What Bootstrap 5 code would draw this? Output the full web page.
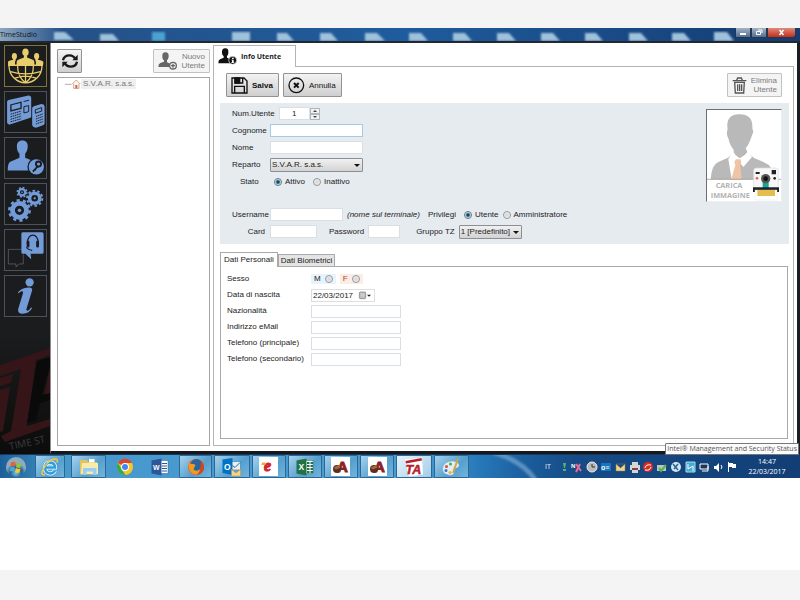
<!DOCTYPE html>
<html lang="it">
  <head>
    <meta charset="utf-8">
    <meta name="viewport" content="width=device-width, initial-scale=1">
    <title>TimeStudio</title>
    <link href="https://cdn.jsdelivr.net/npm/bootstrap@5.3.2/dist/css/bootstrap.min.css" rel="stylesheet">
    <script src="https://cdn.jsdelivr.net/npm/bootstrap@5.3.2/dist/js/bootstrap.bundle.min.js"></script>
    <style>
      body { background: #f4f4f4; font-family: "Liberation Sans", Arial, sans-serif; font-size: 8px; line-height: 10px; color: #222; }
      svg { display: block; flex: none; }
      .page { padding: 28px 0 30px; }
      .sheet { min-height: 542px; }

      /* title bar */
      .titlebar { height: 15px; background: #1d508f; border-bottom: 2px solid #22282e; }
      .titlebar .glass { left: 0; top: 0; width: 100%; height: 13px; }
      .titlebar .app-name { font-family: "Open Sans", sans-serif; font-size: 7px; color: #0c1622; line-height: 13px; }
      .win-btn { height: 10px; width: 16px; border: 1px solid #26364e; border-top: 0; background: linear-gradient(#a3b4c8, #556f90); }
      .win-close { width: 29px; background: linear-gradient(#dd8a7c, #c32f1c); border-radius: 0 0 3px 0; }

      /* side menu */
      .side { width: 50px; background: linear-gradient(#1b1c1d 70%, #0c0c0c); padding: 2px 3px 0 4px; }
      .side .logo { left: 0; bottom: 0; }
      .side-btn { width: 43px; height: 42px; background: #1a1c1e; border: 1px solid #4c5160; color: #739bd8; }
      .side-btn.current { border-color: #83733a; color: #e9cd6b; }

      .work { border-left: 1px solid #8d8d8d; border-right: 3px solid #1a1d22; border-bottom: 3px solid #15181c; padding: 2px 3px 5px 6px; background: #fff; }
      .tree-col { width: 153px; padding-top: 4px; }
      .detail-col { padding-left: 3px; }
      .tree { margin-top: 4px; border: 1px solid #a5a5a5; padding: 1px 7px; color: #777; }
      .tree-node { background: #efefef; padding: 0 2px; }
      .tool { height: 24px; border: 1px solid #939393; border-radius: 1px; background: linear-gradient(#f3f3f3, #cfcfcf); color: #111; line-height: 9px; padding: 0 5px 0 4px; }
      .tool.off { background: #f4f4f4; border-color: #c2c2c2; color: #7b7b7b; padding: 0 4px; }
      .tool.square { width: 25px; padding: 0; }
      .tools { padding: 0 7px 0 6px; }

      /* tabs and their panels */
      .main-tab { width: 83px; height: 22px; border: 1px solid #b4b4b4; border-bottom: 0; background: #fff; margin-bottom: -1px; font-family: "Open Sans", sans-serif; font-weight: 700; font-size: 7px; color: #1c1c1c; }
      .main-panel { border: 1px solid #b4b4b4; padding: 6px 4px 6px 6px; }
      .user-data { background: #e6ebf0; margin-top: 6px; padding: 2px 7px 4px 12px; }
      .line { height: 17px; }
      .second-block { margin-top: 16px; }
      .inner-tab { height: 12px; border: 1px solid #a9a9a9; border-bottom: 0; background: #e4e4e4; color: #222; padding: 0 2px; }
      .inner-tab.active { height: 15px; background: #fff; margin-bottom: -1px; padding: 0 3px; }
      .inner-tabs { margin-top: 8px; }
      .inner-panel { border: 1px solid #a9a9a9; min-height: 173px; padding: 4px 6px; margin-right: 1px; }
      .inner-panel .line { height: 16px; }

      /* form parts */
      .label-main { width: 38px; }
      .label-end { width: 38px; text-align: right; padding-right: 5px; }
      .label-detail { width: 84px; }
      .field { height: 13px; min-height: 0; padding: 0 3px; font-size: 8px; line-height: 11px; border: 1px solid #dadfe3; border-radius: 0; color: #222; background: #fff; }
      .field.focused { border-color: #a9c7e8; }
      .w-name { width: 93px; }
      .w-user { width: 73px; }
      .w-card { width: 47px; }
      .w-pass { width: 32px; }
      .w-detail { width: 90px; }
      .num { width: 31px; text-align: center; }
      .spin { width: 10px; height: 6px; border: 1px solid #b0b6bd; background: #f2f2f2; }
      .date-box { width: 64px; border: 1px solid #dedede; height: 13px; }
      .date-text { width: 46px; border: 0; padding: 0 1px; height: 11px; }
      .combo { height: 14px; padding: 0 10px 0 1px; font-size: 8px; line-height: 11px; border: 1px solid #8b8f94; border-radius: 1px; color: #222;
        background: linear-gradient(#f1f1f1, #d3d3d3); appearance: none; }
      .combo-arrow { right: 3px; top: 6px; border: 3px solid transparent; border-top-color: #111; border-bottom: 0; pointer-events: none; }
      .dot { appearance: none; width: 8px; height: 8px; margin: 0; border: 1px solid #8f979e; border-radius: 50%; background: radial-gradient(#d4d4d4, #f8f8f8); }
      .dot:checked { border-color: #66747f; background: radial-gradient(#16465f 0 25%, #5f9fbd 45%, #f3f7f9 70%); }
      .dot + label { margin-left: 3px; }
      .sex-m { background: #e8f3fc; padding: 0 3px; }
      .sex-f { background: #fdece4; color: #a0472b; padding: 0 3px; }
      .photo { width: 76px; height: 93px; margin-top: 4px; border: 1px solid #6e6e6e; border-right-color: #eee; border-bottom-color: #eee; background: #fff; }

      /* taskbar */
      .taskbar { height: 24px; background: linear-gradient(90deg, #1c6098 0, #4798cc 8%, #4a9dd2 52%, #2678b8 60%, #1b5c9c 66%, #174b86 72%, #123e75); border-top: 1px solid #16395c; }
      .apps { width: 398px; gap: 2px; margin-left: 6px; }
      .app { padding: 0; border: 1px solid transparent; background: none; border-radius: 1px; }
      .app.open { border-color: #2d6690; background: linear-gradient(135deg, #a6d2ee, #559fce 60%, #72b5de); }
      .app.front { background: linear-gradient(135deg, #e6f2fa, #a4cde9); }
      .start { width: 32px; }
      .ie { width: 30px; margin-left: 3px; }
      .tray { width: 186px; height: 14px; }
      .clock { width: 44px; margin-right: 11px; color: #fff; font-family: "Open Sans", sans-serif; font-size: 7px; }
      .lang { width: 14px; margin-right: 4px; color: #d5e2f0; font-size: 7px; }
      .hint { right: 1px; bottom: 23px; border: 1px solid #777; background: #fbfbfb; color: #555; padding: 0 1px; border-radius: 1px; font-family: "Open Sans", sans-serif; font-size: 7px; white-space: nowrap; }
    </style>
  </head>
  <body>
    <div class="page">
      <div class="sheet bg-white">
        <header class="titlebar position-relative d-flex justify-content-between">
          <svg class="glass position-absolute" viewBox="0 0 800 13" preserveAspectRatio="none" aria-hidden="true">
            <defs>
              <linearGradient id="sky"><stop offset="0" stop-color="#8fa7be"/><stop offset=".03" stop-color="#6485aa"/><stop offset=".08" stop-color="#255187"/><stop offset=".5" stop-color="#1f5c9d"/><stop offset="1" stop-color="#143b72"/></linearGradient>
              <filter id="soft"><feGaussianBlur stdDeviation="1.3"/></filter>
            </defs>
            <path fill="url(#sky)" d="M0 0h800v13H0z"/>
            <g fill="#9fc1dc" filter="url(#soft)">
              <path d="M54 4h11l9 8H54zM100 6h13l6 7h-19zM232 4h18v9h-18zM277 5h10l7 8h-17zM320 5h11l7 8h-18zM365 5h12l8 8h-20zM409 5h12l7 8h-19zM453 5h12l7 8h-19zM497 5h12l7 8h-19zM541 5h12l7 8h-19zM585 5h11l7 8h-18zM629 5h12l7 8h-19zM672 5h12l7 8h-19zM714 4h13l7 9h-20z"/>
              <path fill="#4ba2d0" d="M152 4h13v9h-13z"/>
            </g>
          </svg>
          <span class="app-name position-relative">TimeStudio</span>
          <div class="position-relative d-flex">
            <button class="win-btn p-0" aria-label="Riduci"><svg width="14" height="9" viewBox="0 0 14 9"><path d="M4 5h6v2H4z" fill="#fff"/></svg></button>
            <button class="win-btn p-0" aria-label="Ripristina"><svg width="14" height="9" viewBox="0 0 14 9"><path d="M6 2h4v3M4.500 3.500h4v3h-4z" fill="none" stroke="#fff"/></svg></button>
            <button class="win-btn win-close p-0 me-1" aria-label="Chiudi"><svg width="27" height="9" viewBox="0 0 27 9"><path d="M11.500 2l4 5M15.500 2l-4 5" stroke="#fff" stroke-width="1.500"/></svg></button>
          </div>
        </header>

        <div class="d-flex">
          <nav class="side position-relative d-flex flex-column gap-1" aria-label="Menu">
            <svg class="logo position-absolute" width="50" height="110" viewBox="0 0 50 110" aria-hidden="true">
              <path fill="#351518" d="M0 21L50 4v7L36 16 27 82l23-7v7L5 98l-4-6 10-5L21 25 0 32zM0 34l13-4-2 9-11 3zM0 46l10-3-7 44-3 1zM50 25l-6 27 6-2z"/>
              <path fill="#0a0a0a" d="M37 17l13-4v9l-8 29 8-2v7l-10 3-4 17-9 3z"/>
              <text x="10" y="106" transform="rotate(-12 10 106)" fill="#3b3d3f" font-family="Open Sans, sans-serif" font-size="10">TIME ST</text>
            </svg>
            <button class="side-btn current position-relative p-0" aria-label="Utenti">
              <svg width="41" height="40" viewBox="0 0 128 126" fill="currentColor">
                <ellipse cx="64" cy="20" rx="10" ry="12"/><ellipse cx="29" cy="32" rx="8" ry="10"/><ellipse cx="99" cy="32" rx="8" ry="10"/>
                <path d="M59 29h10v7l18 7q6 2 5 15H36q-1-13 5-15l18-7zM25 40h8v5q-3 4-2 13H9V50q1-4 16-7zM95 40h8v3q16 3 17 7v8H97q1-9-2-13zM9 58h110v5H9z"/>
                <g fill="none" stroke="currentColor" stroke-width="4"><path d="M12 62a52 54 0 0 0 104 0M64 62v54M39 62q0 35 25 54 25-19 25-54M17 81q47 14 94 0M31 101q33-12 66 0"/></g>
              </svg>
            </button>
            <button class="side-btn position-relative p-0" aria-label="Terminali">
              <svg width="41" height="40" viewBox="0 0 128 126" fill="currentColor">
                <path d="M6 31q0-5 5-6l62-14q9 0 9 8v58q0 4-5 5l-62 20q-7 1-9-5zM85 51q1-4 5-6l24-7q9 0 10 7v54q0 4-5 6l-22 8q-10-1-12-8z"/>
                <path fill="#1a1c1e" d="M16 39l36-9v23l-36 9z"/><path d="M20 42l28-7v15l-28 7z"/>
                <g fill="none" stroke="#1a1c1e" stroke-width="3"><path d="M58 30l17-4M59 46v20l15-4V43zM95 56l20-7v11l-20 7z"/></g>
                <path stroke="#1a1c1e" stroke-width="3" stroke-dasharray="5 2" d="M17 70l34-10M17 78l34-10M17 86l34-10M17 94l34-10M97 77l22-8M97 85l22-8M97 93l22-8M97 101l22-8"/>
              </svg>
            </button>
            <button class="side-btn position-relative p-0" aria-label="Accessi">
              <svg width="41" height="40" viewBox="0 0 128 126" fill="currentColor">
                <path d="M54 8c12 0 18 8 17 20-1 10-4 17-8 21v13l29 12q7 3 9 28H8q0-23 8-27l29-13V49c-5-4-8-11-8-21C36 16 42 8 54 8z"/>
                <circle cx="98" cy="91" r="28" fill="#1a1c1e"/><circle cx="98" cy="91" r="24"/>
                <circle cx="105" cy="82" r="8" fill="none" stroke="#1a1c1e" stroke-width="6"/><path d="M100 88l-15 16 5 4 3-5 4-1 1-4 8-7" fill="#1a1c1e"/>
              </svg>
            </button>
            <button class="side-btn position-relative p-0" aria-label="Impostazioni">
              <svg width="41" height="40" viewBox="0 0 128 126" fill="none" stroke="currentColor">
                <circle cx="45" cy="83" r="22" stroke-width="15"/><circle cx="45" cy="83" r="32" stroke-width="8" stroke-dasharray="10 10.100"/><circle cx="45" cy="83" r="5" fill="currentColor"/>
                <circle cx="93" cy="45" r="16" stroke-width="11"/><circle cx="93" cy="45" r="24" stroke-width="6" stroke-dasharray="8 7.080"/><circle cx="93" cy="45" r="3" fill="currentColor"/>
                <circle cx="53" cy="26" r="10" stroke-width="7"/><circle cx="53" cy="26" r="15" stroke-width="5" stroke-dasharray="6 5.780"/><circle cx="53" cy="26" r="2" fill="currentColor"/>
              </svg>
            </button>
            <button class="side-btn position-relative p-0" aria-label="Assistenza">
              <svg width="41" height="40" viewBox="0 0 128 126">
                <path fill="none" stroke="#6c7077" stroke-width="2" d="M52 61H10v46h24v9l11-9h12V76"/>
                <path fill="currentColor" d="M55 7h61q5 0 5 5v58q0 5-5 5H80l2 17-18-17h-9q-4 0-4-5V12q0-5 4-5z"/>
                <g fill="none" stroke="#1a1c1e"><path d="M70 42c-2-34 36-34 34 0" stroke-width="4"/><path d="M72 38v13M102 38v13" stroke-width="9" stroke-linecap="round"/><path d="M67 54q3 8 18 10" stroke-width="4"/></g>
              </svg>
            </button>
            <button class="side-btn position-relative p-0" aria-label="Informazioni">
              <svg width="41" height="40" viewBox="0 0 128 126" fill="currentColor">
                <circle cx="77" cy="20" r="13"/><path d="M40 52q10-14 33-16 13-1 12 9L67 104q-1 7 5 5 6-3 9-10l4 2q-9 17-30 18-17 0-14-15l15-50q2-9-7-5l-7 5z"/>
              </svg>
            </button>
          </nav>

          <main class="work d-flex flex-grow-1">
            <section class="tree-col d-flex flex-column flex-shrink-0">
              <div class="d-flex justify-content-between">
                <button class="tool square d-flex align-items-center justify-content-center" aria-label="Aggiorna">
                  <svg width="18" height="18" viewBox="0 0 54 54" fill="none" stroke="#181818" stroke-width="7"><path d="M6 25q3-15 20-15 10 0 16 9M48 29q-3 15-20 15-10 0-16-9"/><path d="M50 8v17H34zM4 46V29h16z" fill="#181818" stroke="none"/></svg>
                </button>
                <button class="tool off d-flex align-items-center justify-content-between" disabled>
                  <svg width="19" height="18" viewBox="0 0 57 54" fill="#666"><path d="M22 1c8 0 11 6 10 13-1 6-3 9-5 11v6l11 5q3 3 4 9H1q0-10 6-12l11-4v-4c-3-2-5-6-5-11C12 6 15 1 22 1z"/><circle cx="45" cy="41" r="10" fill="#f4f4f4" stroke="#666" stroke-width="4"/><path d="M43 35h4v4h4v4h-4v4h-4v-4h-4v-4h4z"/></svg>
                  <span class="text-end ps-1">Nuovo<br>Utente</span>
                </button>
              </div>
              <div class="tree flex-grow-1">
                <div class="d-flex align-items-center">
                  <svg width="16" height="10" viewBox="0 0 48 30"><path d="M0 16h20" stroke="#888" stroke-width="2"/><path d="M22 15L34 3l12 12M26 14v14h16V14" fill="#fff9ee" stroke="#cf9078" stroke-width="2.500"/><path d="M31 18h6v10h-6z" fill="#c96650"/></svg>
                  <span class="tree-node">S.V.A.R. s.a.s.</span>
                </div>
              </div>
            </section>

            <section class="detail-col flex-grow-1 d-flex flex-column">
              <div class="main-tab d-flex align-items-center gap-1 ps-1 position-relative">
                <svg width="19" height="17" viewBox="0 0 57 51"><path d="M22 1c8 0 10 6 9 13 0 5-2 8-4 10v5l11 5q4 2 4 12H1q0-10 5-12l11-5v-5c-3-2-5-5-5-10C11 7 14 1 22 1z" fill="#111"/><circle cx="44" cy="37" r="12" fill="#111" stroke="#fff" stroke-width="2"/><path d="M42 29h5v4h-5zM40 35h7v8h2v2h-9v-2h2v-6h-2z" fill="#fff"/></svg>
                <span>Info Utente</span>
              </div>
              <div class="main-panel flex-grow-1">
                <div class="tools d-flex justify-content-between">
                  <div class="d-flex gap-1">
                    <button class="tool d-flex align-items-center gap-1 fw-bold">
                      <svg width="17" height="17" viewBox="0 0 51 51" fill="none" stroke="#111" stroke-width="4"><path d="M3 3h36l9 9v36H3z"/><path d="M12 3v15h23V3M11 48V28h29v20"/><path d="M12 3h14v15H12z" fill="#111"/></svg>
                      <span>Salva</span>
                    </button>
                    <button class="tool d-flex align-items-center gap-1">
                      <svg width="17" height="17" viewBox="0 0 51 51" fill="none" stroke="#111"><circle cx="25" cy="25" r="22" stroke-width="4"/><path d="M18 18l14 14M32 18L18 32" stroke-width="6"/></svg>
                      <span>Annulla</span>
                    </button>
                  </div>
                  <button class="tool off d-flex align-items-center gap-1" disabled>
                    <svg width="15" height="17" viewBox="0 0 45 51" fill="none" stroke="#555" stroke-width="4"><path d="M2 11h41M14 10l3-7h11l3 7M6 16h33M8 16l2 32h25l2-32M17 22v20M23 22v20M29 22v20"/></svg>
                    <span class="text-end">Elimina<br>Utente</span>
                  </button>
                </div>

                <form class="user-data d-flex justify-content-between">
                  <div>
                    <div class="line d-flex align-items-center">
                      <label for="num">Num.Utente</label>
                      <input class="field num ms-1" id="num" value="1">
                      <div>
                        <button type="button" class="spin d-block p-0" aria-label="Aumenta"><svg width="8" height="4" viewBox="0 0 8 4"><path d="M2 3l2-2 2 2z" fill="#444"/></svg></button>
                        <button type="button" class="spin d-block p-0" aria-label="Diminuisci"><svg width="8" height="4" viewBox="0 0 8 4"><path d="M2 1l2 2 2-2z" fill="#444"/></svg></button>
                      </div>
                    </div>
                    <div class="line d-flex align-items-center">
                      <label class="label-main" for="cognome">Cognome</label>
                      <input class="field focused w-name" id="cognome">
                    </div>
                    <div class="line d-flex align-items-center">
                      <label class="label-main" for="nome">Nome</label>
                      <input class="field w-name" id="nome">
                    </div>
                    <div class="line d-flex align-items-center">
                      <label class="label-main" for="reparto">Reparto</label>
                      <div class="position-relative">
                        <select class="combo w-name d-block" id="reparto"><option>S.V.A.R. s.a.s.</option></select>
                        <span class="combo-arrow position-absolute"></span>
                      </div>
                    </div>
                    <div class="line d-flex align-items-center" role="radiogroup" aria-label="Stato">
                      <span class="label-main ps-2 me-1">Stato</span>
                      <input class="dot" type="radio" name="stato" id="attivo" checked><label class="me-2" for="attivo">Attivo</label>
                      <input class="dot" type="radio" name="stato" id="inattivo"><label for="inattivo">Inattivo</label>
                    </div>
                    <div class="line second-block d-flex align-items-center">
                      <label class="label-main" for="username">Username</label>
                      <input class="field w-user" id="username">
                      <em class="ps-1 pe-2">(nome sul terminale)</em>
                      <span class="me-2">Privilegi</span>
                      <input class="dot" type="radio" name="privilegi" id="utente" checked><label class="me-1" for="utente">Utente</label>
                      <input class="dot" type="radio" name="privilegi" id="admin"><label for="admin">Amministratore</label>
                    </div>
                    <div class="line d-flex align-items-center">
                      <label class="label-end" for="card-no">Card</label>
                      <input class="field w-card" id="card-no">
                      <label class="ps-2 ms-1 pe-1" for="password">Password</label>
                      <input class="field w-pass" type="password" id="password">
                      <label class="ps-3 pe-1" for="gruppo">Gruppo TZ</label>
                      <div class="position-relative">
                        <select class="combo d-block" id="gruppo"><option>1 [Predefinito]</option></select>
                        <span class="combo-arrow position-absolute"></span>
                      </div>
                    </div>
                  </div>
                  <button type="button" class="photo p-0" aria-label="Carica immagine">
                    <svg width="74" height="91" viewBox="0 0 222 273">
                      <path fill="#b9b9b9" d="M62 58c-6-32 12-46 34-45 27-1 42 12 40 42l3 10-8 22q-8 22-15 27l5 12 20 18 30 13q27 10 31 51H11q3-44 23-52l29-13 17-16V119Q68 106 65 88q-9-15-3-30z"/>
                      <path fill="#fff" d="M77 123q8 15 21 22 16-7 26-22l11 18-26 30-14-18-21 55L64 148z"/>
                      <path fill="#efc3a3" d="M87 148h13l3 8-3 10 4 42H73l12-43-3-9z"/>
                      <path stroke="#888" stroke-width="2" d="M0 208h222"/>
                      <text x="66" y="234" text-anchor="middle" fill="#b3b3b3" font-family="Open Sans, sans-serif" font-weight="700" font-size="22">CARICA</text>
                      <text x="70" y="264" text-anchor="middle" fill="#b3b3b3" font-family="Open Sans, sans-serif" font-weight="700" font-size="22">IMMAGINE</text>
                      <rect x="140" y="174" width="74" height="68" rx="8" fill="#f7f7f7" stroke="#ddd" stroke-width="2"/>
                      <path fill="#222" d="M146 186h12v6h-12zM194 180h13v13h-13z"/><path fill="#16a79a" d="M167 214h18v22h-18z"/>
                      <circle cx="176" cy="206" r="14" fill="#555"/><circle cx="176" cy="206" r="7" fill="#111"/><circle cx="150" cy="205" r="4" fill="#e06446"/><circle cx="203" cy="205" r="4" fill="#222"/>
                      <path fill="#1d2429" d="M138 232h78v14h-9v-6h-60v6h-9z"/><path fill="#fff" stroke="#ddd" d="M144 240h66v30h-66z"/><path fill="#e5bd4f" d="M151 240h53v18h-53z"/>
                    </svg>
                  </button>
                </form>

                <div class="inner-tabs d-flex align-items-end" role="tablist">
                  <button class="inner-tab active" role="tab" aria-selected="true">Dati Personali</button>
                  <button class="inner-tab" role="tab" aria-selected="false">Dati Biometrici</button>
                </div>
                <form class="inner-panel">
                  <div class="line d-flex align-items-center" role="radiogroup" aria-label="Sesso">
                    <span class="label-detail">Sesso</span>
                    <span class="sex-m d-flex align-items-center"><label for="sesso-m" class="me-1">M</label><input class="dot" type="radio" name="sesso" id="sesso-m"></span>
                    <span class="sex-f d-flex align-items-center ms-1"><label for="sesso-f" class="me-1">F</label><input class="dot" type="radio" name="sesso" id="sesso-f"></span>
                  </div>
                  <div class="line d-flex align-items-center">
                    <label class="label-detail" for="nascita">Data di nascita</label>
                    <div class="date-box d-flex align-items-center">
                      <input class="field date-text" id="nascita" value="22/03/2017">
                      <svg width="14" height="9" viewBox="0 0 42 27"><rect x="4" y="3" width="19" height="20" rx="3" fill="#bbb" stroke="#777" stroke-width="2"/><path d="M7 9h13M7 14h13M11 6v14M16 6v14" stroke="#eee"/><path d="M27 11h12l-6 6z" fill="#222"/></svg>
                    </div>
                  </div>
                  <div class="line d-flex align-items-center">
                    <label class="label-detail" for="nazionalita">Nazionalità</label>
                    <input class="field w-detail" id="nazionalita">
                  </div>
                  <div class="line d-flex align-items-center">
                    <label class="label-detail" for="email">Indirizzo eMail</label>
                    <input class="field w-detail" id="email">
                  </div>
                  <div class="line d-flex align-items-center">
                    <label class="label-detail" for="tel1">Telefono (principale)</label>
                    <input class="field w-detail" id="tel1">
                  </div>
                  <div class="line d-flex align-items-center">
                    <label class="label-detail" for="tel2">Telefono (secondario)</label>
                    <input class="field w-detail" id="tel2">
                  </div>
                </form>
              </div>
            </section>
          </main>
        </div>

        <footer class="taskbar position-relative d-flex align-items-stretch">
          <button class="app start d-flex align-items-center justify-content-center" aria-label="Start">
            <svg width="22" height="22" viewBox="0 0 44 44"><defs><radialGradient id="orb" cy=".8"><stop offset="0" stop-color="#6fc9e8"/><stop offset=".6" stop-color="#245f86"/><stop offset="1" stop-color="#8eabc0"/></radialGradient></defs><circle cx="22" cy="22" r="20" fill="url(#orb)"/><path fill="#e9612e" d="M12 13q5-3 9 0l-1 8q-4-2-9 0z"/><path fill="#8ec63f" d="M23 14q5 3 10 0l-2 9q-5 2-9-1z"/><path fill="#4aa8e0" d="M11 23q5-2 9 0l-2 9q-4-3-9-1z"/><path fill="#fbc52e" d="M22 24q4 3 9 1l-2 8q-5 2-9-1z"/></svg>
          </button>
          <button class="app open ie d-flex align-items-center justify-content-center" aria-label="Internet Explorer">
            <svg width="20" height="20" viewBox="0 0 40 40" fill="none"><path d="M30 27q-3 6-10 6-10-1-10-12 1-10 10-10 10 1 10 10H12" stroke="#eaf7ff" stroke-width="8"/><path d="M30 27q-3 6-10 6-10-1-10-12 1-10 10-10 10 1 10 10H12" stroke="#2f9fdc" stroke-width="5"/><path d="M34 11q3-8-5-7Q13 8 5 28q-4 9 5 7" stroke="#f3ca41" stroke-width="3"/></svg>
          </button>
          <div class="apps d-flex">
            <button class="app open flex-fill d-flex align-items-center justify-content-center" aria-label="Esplora risorse">
              <svg width="20" height="18" viewBox="0 0 40 36"><path fill="#e2c45c" d="M2 4h14l3 4h17v25H2z"/><path fill="#f9ebac" d="M6 10h32v22H4z"/><path fill="#fff" d="M20 2h11v7H20z"/><path fill="#9bcdf0" d="M8 20h27v14h-7v-7H15v7H8z"/></svg>
            </button>
            <button class="app flex-fill d-flex align-items-center justify-content-center" aria-label="Chrome">
              <svg width="18" height="18" viewBox="0 0 36 36"><circle cx="18" cy="18" r="16" fill="#f5c72d"/><path fill="#db4437" d="M18 18L4 10a16 16 0 0 1 28 0H18z"/><path fill="#34a853" d="M4 10l10 17 5 7A16 16 0 0 1 4 10z"/><circle cx="18" cy="18" r="8" fill="#fff"/><circle cx="18" cy="18" r="6" fill="#4285f4"/></svg>
            </button>
            <button class="app flex-fill d-flex align-items-center justify-content-center" aria-label="Word">
              <svg width="18" height="18" viewBox="0 0 36 36"><path fill="#fff" stroke="#2b579a" d="M18 5h16v26H18z"/><path stroke="#2b579a" stroke-width="2" d="M22 11h10M22 16h10M22 21h10M22 26h10"/><path fill="#2b579a" d="M1 5l20-4v34L1 31z"/><text x="4" y="24" fill="#fff" font-family="Liberation Sans" font-weight="700" font-size="14">W</text></svg>
            </button>
            <button class="app open flex-fill d-flex align-items-center justify-content-center" aria-label="Firefox">
              <svg width="18" height="18" viewBox="0 0 36 36"><circle cx="18" cy="18" r="16" fill="#e5661c"/><circle cx="19" cy="14" r="12" fill="#28659e"/><path fill="#f09a26" d="M3 9q5 4 10 3 6 1 2 6l-2 5q8 7 17-5 2 13-12 15Q3 33 3 9z"/><path fill="#cc4820" d="M27 5q10 9 6 20-5 8-14 9 10-7 8-29z"/></svg>
            </button>
            <button class="app open flex-fill d-flex align-items-center justify-content-center" aria-label="Outlook">
              <svg width="20" height="20" viewBox="0 0 40 40"><path fill="#eee" stroke="#0072c6" d="M19 9h18v18H19z"/><path stroke="#0072c6" stroke-width="2" fill="none" d="M21 17l5 4 10-10"/><path fill="#0072c6" d="M1 5l20-3v34L1 32z"/><text x="4" y="25" fill="#fff" font-family="Liberation Sans" font-weight="700" font-size="17">O</text><path fill="#f5d18a" stroke="#c59445" d="M19 25h18v13H19zl9 7 9-7"/></svg>
            </button>
            <button class="app open flex-fill d-flex align-items-center justify-content-center" aria-label="e">
              <svg width="19" height="19" viewBox="0 0 38 38"><path fill="#fff" d="M0 0h38v38H0z"/><text x="10" y="28" fill="#d1232d" stroke="#d1232d" stroke-width="2" font-family="Liberation Serif" font-style="italic" font-weight="700" font-size="32">e</text><path fill="#efac32" d="M6 11h7v5H5z"/></svg>
            </button>
            <button class="app open flex-fill d-flex align-items-center justify-content-center" aria-label="Excel">
              <svg width="18" height="18" viewBox="0 0 36 36"><path fill="#fff" stroke="#217346" d="M18 5h16v26H18z"/><path stroke="#217346" stroke-width="4" stroke-dasharray="5 2" d="M22 10h12M22 16h12M22 22h12M22 28h12"/><path fill="#217346" d="M1 5l20-4v34L1 31z"/><text x="5" y="24" fill="#fff" font-family="Liberation Sans" font-weight="700" font-size="17">X</text></svg>
            </button>
            <button class="app open flex-fill d-flex align-items-center justify-content-center" aria-label="Archivio">
              <svg width="19" height="19" viewBox="0 0 38 38"><path fill="#fff" d="M0 0h38v38H0z"/><text x="12" y="30" fill="#8f1f22" stroke="#8f1f22" stroke-width="2" font-family="Liberation Sans" font-weight="700" font-size="30">A</text><circle cx="12" cy="24" r="8" fill="#5c3021"/><path fill="#a66839" d="M5 21l11-5 3 5-9 4z"/></svg>
            </button>
            <button class="app open flex-fill d-flex align-items-center justify-content-center" aria-label="Archivio 2">
              <svg width="19" height="19" viewBox="0 0 38 38"><path fill="#fff" d="M0 0h38v38H0z"/><text x="12" y="30" fill="#8f1f22" stroke="#8f1f22" stroke-width="2" font-family="Liberation Sans" font-weight="700" font-size="30">A</text><circle cx="12" cy="24" r="8" fill="#5c3021"/><path fill="#a66839" d="M5 21l11-5 3 5-9 4z"/></svg>
            </button>
            <button class="app open front flex-fill d-flex align-items-center justify-content-center" aria-label="TimeStudio">
              <svg width="20" height="20" viewBox="0 0 40 40"><path fill="#fff" d="M2 5l34-4 2 34-28 4z"/><path fill="#b71d2a" d="M3 8l32-6 1 5-32 6z"/><text x="3" y="33" fill="#b71d2a" stroke="#b71d2a" font-family="Liberation Sans" font-style="italic" font-weight="700" font-size="25">TA</text></svg>
            </button>
            <button class="app open flex-fill d-flex align-items-center justify-content-center" aria-label="Paint">
              <svg width="20" height="20" viewBox="0 0 40 40"><path fill="#dfedf5" stroke="#7fa6bd" d="M3 22Q6 8 24 8q14 2 12 11-4 4-9 4-5 2 0 7-2 8-12 6Q2 33 3 22z"/><circle cx="11" cy="19" r="3" fill="#df4d36"/><circle cx="19" cy="14" r="3" fill="#56a742"/><circle cx="10" cy="27" r="3" fill="#3b72c8"/><circle cx="18" cy="31" r="3" fill="#e2b236"/><path stroke="#d3a24a" stroke-width="4" d="M34 3L24 32"/></svg>
            </button>
          </div>
          <div class="d-flex align-items-center ms-auto">
            <svg width="50" height="23" viewBox="0 0 50 23" aria-hidden="true"><path d="M2-3Q32 6 45 26" fill="none" stroke="#86b3d8" stroke-width="5" opacity=".6" filter="url(#soft)"/></svg>
            <span class="lang text-center">IT</span>
            <svg class="tray" viewBox="0 0 186 14" role="img" aria-label="Area di notifica">
              <path fill="#55b769" d="M4 3h3l-1 5H5zM4 9h3v2H4z"/>
              <text x="12" y="8" fill="#fff" font-family="Liberation Sans" font-weight="700" font-size="6">N</text><path d="M17 4l5 7M21 4l-4 8" stroke="#e76b9b" stroke-width="2"/>
              <circle cx="33" cy="7" r="5" fill="#b9b9b9" stroke="#eee"/><path d="M33 4v3h3" stroke="#333" fill="none"/>
              <path fill="#1675bc" d="M42 3h10v8H42z"/><text x="42" y="10" fill="#fff" font-family="Liberation Sans" font-weight="700" font-size="7">o≡</text>
              <path fill="#f0d38f" stroke="#9b7944" stroke-width=".5" d="M57 4h9v7h-9zl4.500 4L66 4"/>
              <path fill="#d5d5d5" d="M71 5h10v5H71zM73 2h6v3h-6zM73 9h6v4h-6z"/><path fill="#8a3e40" d="M73 8h6v2h-6z"/>
              <circle cx="89" cy="7" r="5" fill="#dc2b25"/><path d="M86 8q1-4 6-3M92 7q-1 4-6 3" stroke="#fff" fill="none"/>
              <path fill="#b9c5c6" d="M98 5h9v6h-9z"/><path d="M100 8l2 3 5-6" stroke="#56b348" stroke-width="2" fill="none"/>
              <circle cx="117" cy="7" r="5" fill="#d6e6f2"/><path d="M114 4l5 6M115 9l4-5" stroke="#276496" stroke-width="1.500"/>
              <path fill="#45acd2" stroke="#a6dded" d="M127 2h9v10h-9z"/><path d="M129 4v5l5-3v5" stroke="#fff" fill="none"/>
              <path d="M141 4h8v5h-8zM143 11h6v-5" fill="#183656" stroke="#fff"/>
              <path fill="#fff" d="M155 6h2l3-3v9l-3-3h-2z"/><path d="M162 5q2 2 0 4" stroke="#fff" fill="none"/>
              <path fill="#fff" d="M169 2h1v10h-1zM170 3h4v1h3v4h-4V7h-3z"/>
            </svg>
            <div class="clock text-center">14:47<br>22/03/2017</div>
          </div>
          <div class="hint position-absolute">Intel® Management and Security Status</div>
        </footer>
      </div>
    </div>
  </body>
</html>
